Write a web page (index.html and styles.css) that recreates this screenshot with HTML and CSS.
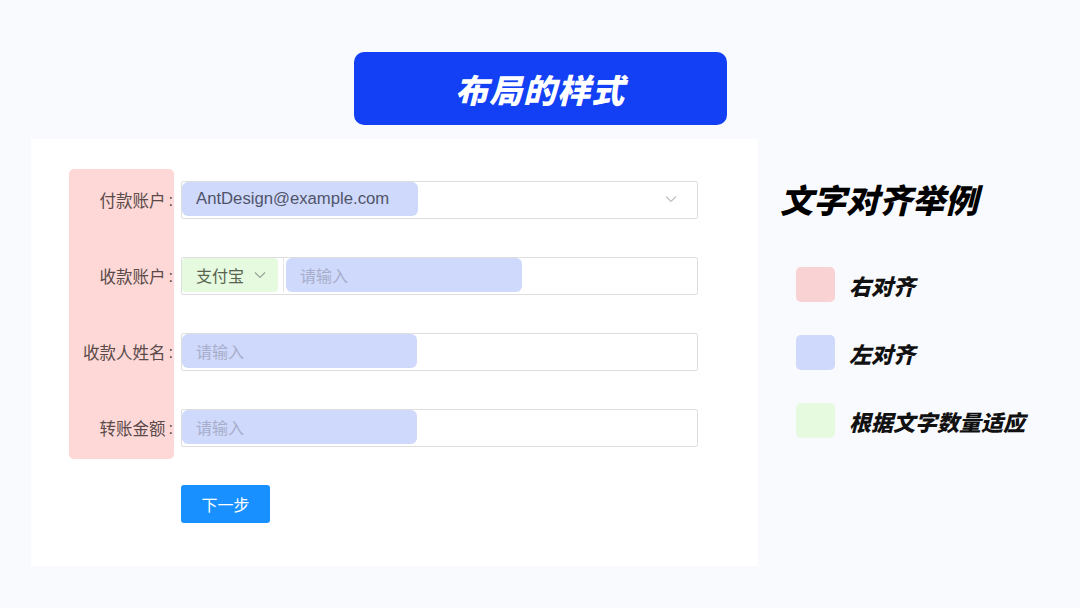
FILE: index.html
```html
<!DOCTYPE html>
<html lang="zh-CN">
<head>
<meta charset="utf-8">
<title>布局的样式</title>
<link rel="stylesheet" href="styles.css">
</head>
<body>
<div class="page">
  <div class="title-box">布局的样式</div>
  <div class="content">
    <div class="card">
      <div class="form">
        <div class="label-col">
          <div class="label">付款账户<span class="colon">:</span></div>
          <div class="label">收款账户<span class="colon">:</span></div>
          <div class="label">收款人姓名<span class="colon">:</span></div>
          <div class="label">转账金额<span class="colon">:</span></div>
        </div>
        <div class="field-col">
          <div class="field">
            <div class="hl blue value">AntDesign@example.com</div>
            <span class="grow"></span>
            <svg class="chev" width="12" height="8" viewBox="0 0 12 8"><path d="M1 1.5 L6 6.5 L11 1.5" fill="none" stroke="#bfbfbf" stroke-width="1.2"/></svg>
          </div>
          <div class="field">
            <div class="hl green select">支付宝
              <svg class="chev small" width="12" height="8" viewBox="0 0 12 8"><path d="M1 1.5 L6 6.5 L11 1.5" fill="none" stroke="#9aa39a" stroke-width="1.2"/></svg>
            </div>
            <span class="divider"></span>
            <div class="hl blue placeholder">请输入</div>
          </div>
          <div class="field">
            <div class="hl blue placeholder">请输入</div>
          </div>
          <div class="field">
            <div class="hl blue placeholder">请输入</div>
          </div>
        </div>
      </div>
      <div class="actions">
        <button class="btn">下一步</button>
      </div>
    </div>
    <div class="side">
      <div class="side-title">文字对齐举例</div>
      <div class="legend">
        <div class="legend-row"><span class="sw pink"></span><span class="lt">右对齐</span></div>
        <div class="legend-row"><span class="sw blue"></span><span class="lt">左对齐</span></div>
        <div class="legend-row"><span class="sw green"></span><span class="lt">根据文字数量适应</span></div>
      </div>
    </div>
  </div>
</div>
</body>
</html>
```
FILE: styles.css
```css
* { box-sizing: border-box; }
html, body { margin: 0; padding: 0; }
body {
  width: 1080px;
  height: 608px;
  background: #f9fafe;
  font-family: "Noto Sans CJK SC", "Noto Sans", sans-serif;
  overflow: hidden;
}
.page { padding-top: 52px; }
.title-box {
  width: 373px;
  height: 73px;
  margin: 0 auto;
  background: #1340f4;
  border-radius: 10px;
  color: #fff;
  font-size: 33px;
  font-weight: 800;
  font-style: italic;
  display: flex;
  align-items: center;
  justify-content: center;
  letter-spacing: 1px;
}
.content {
  display: flex;
  margin-top: 14px;
  padding-left: 31px;
}
.card {
  width: 727px;
  height: 427px;
  background: #fff;
  padding: 30px 0 0 38px;
}
.form { display: flex; gap: 7px; }
.label-col {
  width: 105px;
  background: #fdd8d6;
  border-radius: 5px;
  padding: 12px 0;
  display: flex;
  flex-direction: column;
  gap: 38px;
}
.label {
  height: 38px;
  display: flex;
  align-items: center;
  justify-content: flex-end;
  padding-right: 1px;
  font-size: 16.5px;
  color: #5a4a4a;
}
.colon { margin-left: 3px; font-family: "Liberation Sans", sans-serif; }
.field-col {
  padding: 12px 0;
  display: flex;
  flex-direction: column;
  gap: 38px;
}
.field {
  width: 517px;
  height: 38px;
  border: 1px solid #dedede;
  border-radius: 2px;
  display: flex;
  align-items: stretch;
  padding-bottom: 2px;
}
.hl {
  border-radius: 6px;
  display: flex;
  align-items: center;
  font-size: 16px;
  padding-left: 14px;
}
.blue { background: #cfd9fb; }
.green { background: #e5fadf; }
.pink { background: #f9d3d3; }
.value {
  width: 236px;
  color: #50546a;
  font-family: "Liberation Sans", "Noto Sans CJK SC", sans-serif;
  font-size: 16.7px;
}
.placeholder { width: 236px; color: #a7adcb; }
.field .placeholder:first-child { width: 235px; }
.select {
  width: 96px;
  color: #59634f;
  border-radius: 4px;
  gap: 10px;
}
.divider { width: 6px; border-right: 1px solid #e6e6e6; margin-right: 2px; }
.grow { flex: 1; }
.chev { align-self: center; margin-right: 20px; }
.chev.small { margin-right: 0; }
.actions { padding: 26px 0 0 112px; }
.btn {
  width: 89px;
  height: 38px;
  border: none;
  border-radius: 3px;
  background: #1890ff;
  color: #fff;
  font-family: "Noto Sans CJK SC", sans-serif;
  font-size: 16px;
  padding: 0;
}
.side { padding: 36px 0 0 22px; }
.side-title {
  font-size: 33px;
  font-weight: 900;
  font-style: italic;
  color: #000;
  line-height: 48px;
}
.legend {
  margin-top: 44px;
  padding-left: 16px;
  display: flex;
  flex-direction: column;
  gap: 33px;
}
.legend-row { display: flex; align-items: center; gap: 14px; height: 35px; }
.sw { width: 39px; height: 35px; border-radius: 5px; display: block; }
.lt {
  font-size: 22px;
  font-weight: 900;
  font-style: italic;
  color: #111;
}
```
